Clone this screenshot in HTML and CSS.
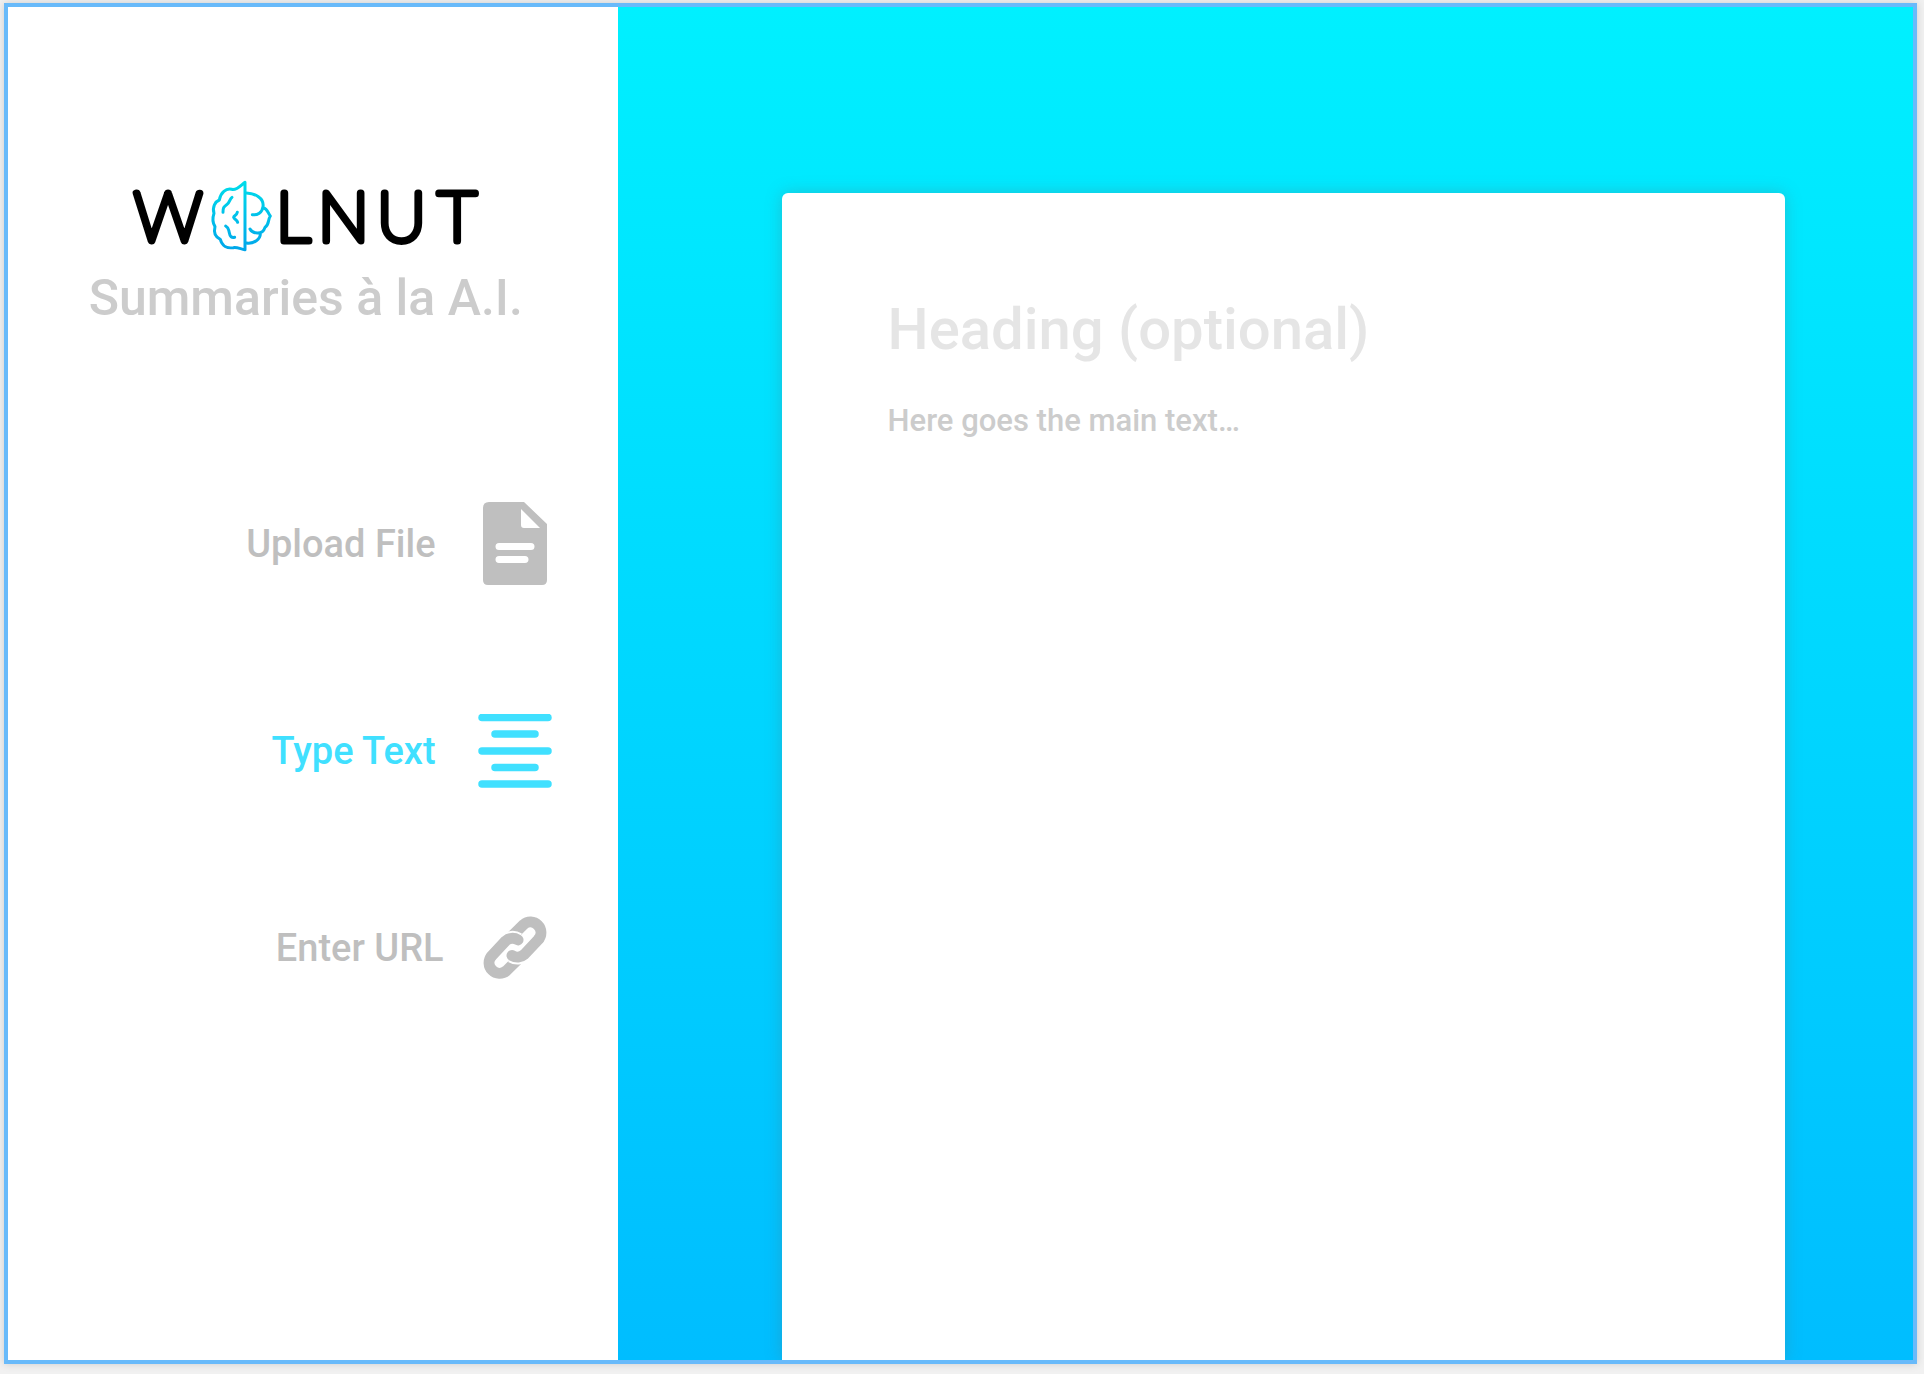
FILE: index.html
```html
<!DOCTYPE html>
<html lang="en">
<head>
  <meta charset="utf-8">
  <meta name="viewport" content="width=device-width, initial-scale=1">
  <title>Walnut</title>
  <link rel="stylesheet" href="styles.css">
</head>
<body>
  <div class="window">
    <aside class="sidebar">
      <header class="brand">
        <svg class="logo" viewBox="-8 -12 368 96" role="img" aria-label="Walnut">
          <defs>
            <linearGradient id="brain" gradientUnits="userSpaceOnUse" x1="0" y1="35" x2="0" y2="241">
              <stop offset="0" stop-color="#00dcea"/>
              <stop offset="1" stop-color="#00a6ea"/>
            </linearGradient>
          </defs>
          <text class="wordmark" x="4" y="61">W</text>
          <text class="wordmark" x="146" y="61" dx="0 8 8 12">LNUT</text>
          <g transform="translate(70 -10) scale(.3333)" fill="none" stroke="url(#brain)" stroke-width="9" stroke-linecap="round" stroke-linejoin="round">
            <path d="M135 37V239C120 236 110 231 100 233C82 236 66 228 61 208C43 200 41 186 45 170C36 156 37 145 42 130C36 110 46 95 58 90C62 68 78 54 95 58C112 62 124 44 135 37Z"/>
            <path d="M139 69C165 70 193 84 189 110C187 128 172 136 157 134M189 112C205 118 203 130 211 138C203 150 208 165 195 172C188 196 158 192 150 177M181 190C182 208 162 222 139 219"/>
            <path d="M96 82C88 88 90 98 80 104C70 112 69 115 69 127M112 127C110 137 102 136 101 142C103 149 111 148 113 157M77 168C88 174 85 180 88 188C90 200 95 204 104 202"/>
          </g>
        </svg>
        <p class="tagline">Summaries à la A.I.</p>
      </header>
      <nav class="modes" aria-label="Input mode">
        <button class="mode" type="button">
          <span>Upload File</span>
          <svg class="icon" width="74" height="84" viewBox="0 0 74 84" aria-hidden="true">
            <path fill="currentColor" fill-rule="evenodd" d="M11 0H46L69 22V78Q69 83 64 83H10Q5 83 5 78V6Q5 0 11 0ZM43 7V23Q43 26 46 26H62ZM21 41A3 3 0 0 0 21 48H53A3 3 0 0 0 53 41ZM21 54A3 3 0 0 0 21 61H47A3 3 0 0 0 47 54Z"/>
          </svg>
        </button>
        <button class="mode mode-active" type="button" aria-pressed="true">
          <span>Type Text</span>
          <svg class="icon" width="74" height="74" viewBox="0 0 74 74" aria-hidden="true">
            <path fill="none" stroke="currentColor" stroke-width="7.500" stroke-linecap="round" d="M4 3.500H70M17 20H57M4 37H70M17 53.500H57M4 70H70"/>
          </svg>
        </button>
        <button class="mode mode-link" type="button">
          <span>Enter URL</span>
          <svg class="icon" width="74" height="64" viewBox="0 5 74 64" aria-hidden="true">
            <defs>
              <path id="link-arm" d="M60.400 28.400A10.500 10.500 0 0 0 45.600 13.600L32 27"/>
              <path id="link-hook" d="M34 44.500A10.500 10.500 0 0 0 46.400 43.400"/>
              <path id="link-side" d="M34 44.500A10.500 10.500 0 0 0 46.400 43.400L60.400 28.400"/>
            </defs>
            <g fill="none" stroke="currentColor" stroke-width="11">
              <use href="#link-arm"/>
              <use href="#link-arm" transform="rotate(180 37 36.700)"/>
              <g stroke="#fff" stroke-width="15">
                <use href="#link-hook"/>
                <use href="#link-hook" transform="rotate(180 37 36.700)"/>
              </g>
              <g stroke-linecap="round">
                <use href="#link-side"/>
                <use href="#link-side" transform="rotate(180 37 36.700)"/>
              </g>
            </g>
          </svg>
        </button>
      </nav>
    </aside>
    <main class="stage">
      <form class="sheet">
        <input class="heading" type="text" placeholder="Heading (optional)" aria-label="Heading">
        <textarea class="body-text" placeholder="Here goes the main text…" aria-label="Main text"></textarea>
      </form>
    </main>
  </div>
</body>
</html>
```
FILE: styles.css
```css
* {
  box-sizing: border-box;
}

body {
  margin: 0;
  min-height: 100vh;
  padding: 3px 7px 10px 4px;
  display: flex;
  background: #f1f1f1;
  font-family: Roboto, "Liberation Sans", sans-serif;
  font-weight: 500;
}

.window {
  flex: 1;
  display: grid;
  grid-template-columns: 32% 1fr;
  border: 4px solid #68bafa;
  background: #fff;
  box-shadow: 0 0 8px rgba(0, 0, 0, 0.15);
}

.sidebar {
  padding-top: 161px;
}

.brand {
  display: flex;
  flex-direction: column;
  align-items: center;
  padding-right: 14px;
}

.logo {
  width: 368px;
  height: 96px;
}

.wordmark {
  font-family: Lato, sans-serif;
  font-size: 68px;
  font-weight: 100;
  fill: #000;
  stroke: #000;
  stroke-width: 7px;
  stroke-linejoin: round;
}

.tagline {
  margin: 2px 0 0;
  font-size: 50px;
  line-height: 64px;
  color: #ccc;
}

.modes {
  display: flex;
  flex-direction: column;
  gap: 128px;
  padding-right: 66px;
  margin-top: 172px;
}

.mode {
  display: flex;
  align-items: center;
  justify-content: flex-end;
  gap: 42px;
  padding: 0;
  border: 0;
  background: none;
  color: #bfbfbf;
  font: inherit;
  font-size: 38px;
  line-height: 48px;
  cursor: pointer;
}

.mode-active {
  color: #40e0ff;
}

.mode-link {
  gap: 34px;
}

.icon {
  display: block;
}

.stage {
  display: flex;
  padding: 186px 128px 0 164px;
  background: linear-gradient(#00f0ff, #00bdff);
}

.sheet {
  flex: 1;
  display: flex;
  flex-direction: column;
  gap: 34px;
  padding: 98px 104px 0 106px;
  border-radius: 6px 6px 0 0;
  background: #fff;
  box-shadow: 0 0 16px rgba(80, 120, 130, 0.35);
  clip-path: inset(-20px -20px 0);
}

.heading,
.body-text {
  width: 100%;
  padding: 0;
  border: 0;
  outline: 0;
  background: none;
  color: #555;
  font: inherit;
}

.heading {
  height: 76px;
  font-size: 58px;
}

.body-text {
  flex: 1;
  resize: none;
  font-size: 31px;
  line-height: 40px;
}

.heading::placeholder {
  color: #e5e5e5;
}

.body-text::placeholder {
  color: #ccc;
}
```
